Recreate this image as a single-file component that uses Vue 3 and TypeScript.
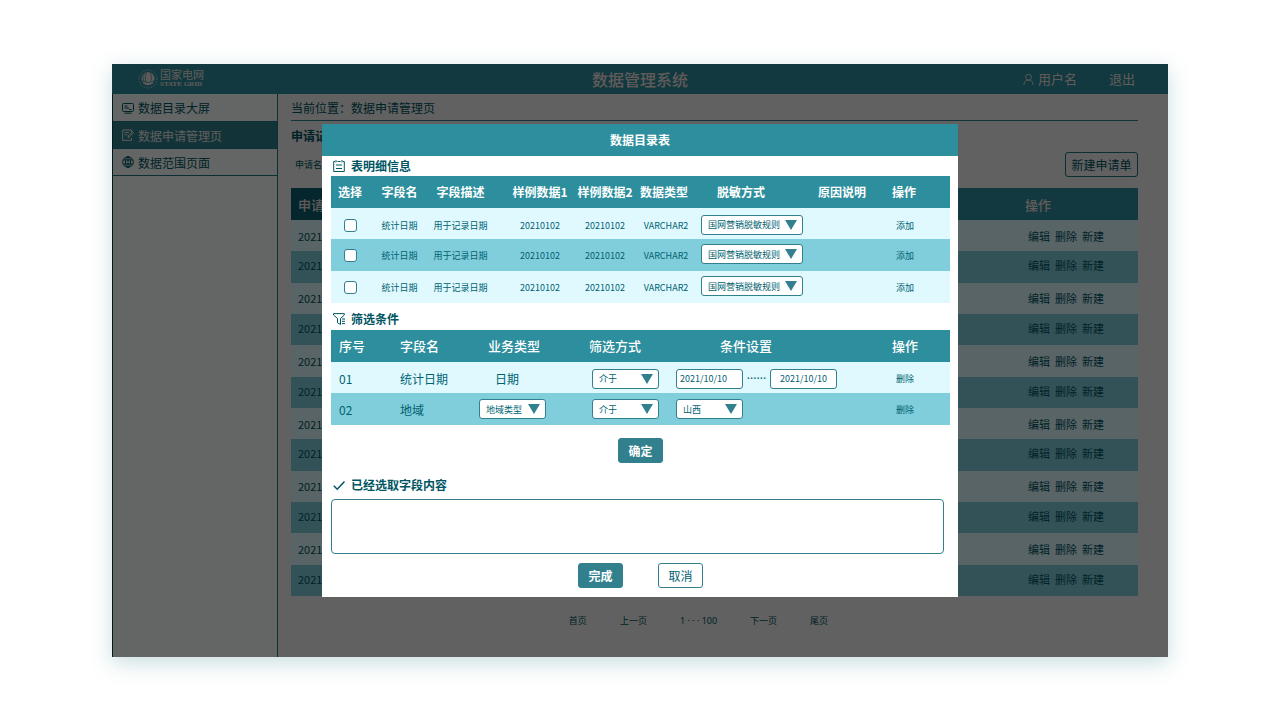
<script setup lang="ts">
import { ref } from 'vue'

interface Field {
  checked: boolean
  name: string
  desc: string
  sample1: string
  sample2: string
  type: string
  rule: string
}

const makeField = (): Field => ({
  checked: false,
  name: '统计日期',
  desc: '用于记录日期',
  sample1: '20210102',
  sample2: '20210102',
  type: 'VARCHAR2',
  rule: '国网营销脱敏规则',
})

const fields = ref<Field[]>([makeField(), makeField(), makeField()])
const records = Array.from({ length: 12 }, (_, i) => ({ id: i, code: '20210' }))
const pages = ['首页', '上一页', '1 · · · 100', '下一页', '尾页']
const startDate = ref('2021/10/10')
const endDate = ref('2021/10/10')
const selected = ref('')
</script>

<template>
  <div class="page">
    <div class="window">
      <header class="topbar">
        <div class="logo">
          <svg class="globe" viewBox="0 0 20 20" aria-hidden="true">
            <circle cx="10" cy="10" r="9" fill="none" stroke="#f0e4e0" stroke-width="1" stroke-dasharray="1 1.500" />
            <circle cx="10" cy="9.600" r="6.600" fill="#f0e4e0" stroke="none" />
            <path d="M9.500 2.500c-2.500 3-3 7-1 10.500M11 2.500c2.500 3 3 6.500 1.500 10M6.500 4.500c-2 3-2 5.500 0 8.500M3.500 11.500c4 2.500 9 2.500 13 0" fill="none" stroke="#2d8e9d" stroke-width="0.800" />
          </svg>
          <div class="logo-text">
            <span class="logo-cn">国家电网</span>
            <span class="logo-en">STATE GRID</span>
          </div>
        </div>
        <h1>数据管理系统</h1>
        <div class="account">
          <a href="#" class="user">
            <svg viewBox="0 0 12 13" aria-hidden="true">
              <circle cx="6" cy="4" r="3.200" />
              <path d="M1 12.500C1 9 3 7.200 6 7.200s5 1.800 5 5.300" />
            </svg>
            用户名
          </a>
          <a href="#">退出</a>
        </div>
      </header>

      <div class="main">
        <nav class="sidebar">
          <a href="#">
            <svg viewBox="0 0 12 12" aria-hidden="true">
              <rect x="0.500" y="1.500" width="11" height="8" rx="1" />
              <path d="M2.500 4h3M2.500 6h4.500M7 7.500h2.500M2.500 11.200h7" />
            </svg>
            数据目录大屏
          </a>
          <a href="#" class="active">
            <svg viewBox="0 0 12 12" aria-hidden="true">
              <path d="M9.500 3V1H.7v10.300h8.800V9M2.500 3.500h4.500M2.500 5.800h3M6 8.500l.4-1.800 4-4 1.100 1.100-4 4z" />
            </svg>
            数据申请管理页
          </a>
          <a href="#">
            <svg viewBox="0 0 12 12" aria-hidden="true">
              <circle cx="6" cy="6" r="5.300" />
              <ellipse cx="6" cy="6" rx="2.500" ry="5.300" />
              <path d="M6 .7v10.600M1.200 4h9.600M1.200 8h9.600" />
            </svg>
            数据范围页面
          </a>
        </nav>

        <section class="content">
          <p class="crumb">当前位置：数据申请管理页</p>
          <h2>申请记录</h2>
          <div class="filter">
            <span>申请名称</span>
            <button type="button">新建申请单</button>
          </div>
          <table class="records">
            <thead>
              <tr><th>申请号</th><th class="ops">操作</th></tr>
            </thead>
            <tbody>
              <tr v-for="r in records" :key="r.id">
                <td>{{ r.code }}</td>
                <td class="ops">
                  <div><a href="#">编辑</a><a href="#">删除</a><a href="#">新建</a></div>
                </td>
              </tr>
            </tbody>
          </table>
          <div class="pager">
            <a v-for="p in pages" :key="p" href="#">{{ p }}</a>
          </div>
        </section>
      </div>

      <div class="mask">
        <div class="dialog" role="dialog" aria-labelledby="dialog-title">
          <h2 id="dialog-title">数据目录表</h2>
          <div class="body">
            <h3>
              <svg viewBox="0 0 12 12" aria-hidden="true">
                <path d="M2 1.500H.7v10h10.600v-10H10M4.500 1.500h3M3 0v2.500M9 0v2.500M3 5h6M3 8.500h6" />
              </svg>
              表明细信息
            </h3>
            <table class="grid fields">
              <colgroup>
                <col class="w38" /><col class="w61" /><col class="w78" /><col class="w64" /><col class="w66" />
                <col class="w56" /><col class="w116" /><col /><col class="w76" />
              </colgroup>
              <thead>
                <tr>
                  <th>选择</th><th>字段名</th><th class="desc">字段描述</th><th>样例数据1</th><th>样例数据2</th>
                  <th class="type">数据类型</th><th class="rule">脱敏方式</th><th>原因说明</th><th class="act">操作</th>
                </tr>
              </thead>
              <tbody>
                <tr v-for="(f, i) in fields" :key="i">
                  <td><input v-model="f.checked" type="checkbox" :aria-label="f.name" /></td>
                  <td>{{ f.name }}</td>
                  <td class="desc">{{ f.desc }}</td>
                  <td>{{ f.sample1 }}</td>
                  <td>{{ f.sample2 }}</td>
                  <td>{{ f.type }}</td>
                  <td class="ctl">
                    <span class="select wide">
                      <select v-model="f.rule" aria-label="脱敏方式"><option>国网营销脱敏规则</option></select>
                      <svg viewBox="0 0 12 10" aria-hidden="true"><path d="M0 0h12L6 10z" /></svg>
                    </span>
                  </td>
                  <td></td>
                  <td class="act"><a href="#">添加</a></td>
                </tr>
              </tbody>
            </table>

            <h3 class="second">
              <svg viewBox="0 0 12 12" aria-hidden="true">
                <path d="M.5.600h10.800v1.400L7.500 5.500v6L4.500 9.800V5.500L.5 2zM9 6h3M9 8.300h3M9 10.600h3" />
              </svg>
              筛选条件
            </h3>
            <table class="grid conds">
              <colgroup>
                <col class="w61" /><col class="w80" /><col class="w112" /><col class="w84" /><col /><col class="w76" />
              </colgroup>
              <thead>
                <tr>
                  <th>序号</th><th>字段名</th><th class="biz">业务类型</th><th class="way">筛选方式</th>
                  <th class="setting">条件设置</th><th class="act">操作</th>
                </tr>
              </thead>
              <tbody>
                <tr>
                  <td>01</td>
                  <td>统计日期</td>
                  <td class="date">日期</td>
                  <td class="ctl">
                    <span class="select">
                      <select aria-label="筛选方式"><option>介于</option></select>
                      <svg viewBox="0 0 12 10" aria-hidden="true"><path d="M0 0h12L6 10z" /></svg>
                    </span>
                  </td>
                  <td class="ctl">
                    <div class="range">
                      <input v-model="startDate" type="text" aria-label="开始日期" />
                      <span>······</span>
                      <input v-model="endDate" type="text" class="end" aria-label="结束日期" />
                    </div>
                  </td>
                  <td class="act"><a href="#">删除</a></td>
                </tr>
                <tr>
                  <td>02</td>
                  <td>地域</td>
                  <td class="area">
                    <span class="select">
                      <select aria-label="业务类型"><option>地域类型</option></select>
                      <svg viewBox="0 0 12 10" aria-hidden="true"><path d="M0 0h12L6 10z" /></svg>
                    </span>
                  </td>
                  <td class="ctl">
                    <span class="select">
                      <select aria-label="筛选方式"><option>介于</option></select>
                      <svg viewBox="0 0 12 10" aria-hidden="true"><path d="M0 0h12L6 10z" /></svg>
                    </span>
                  </td>
                  <td class="ctl">
                    <span class="select">
                      <select aria-label="条件设置"><option>山西</option></select>
                      <svg viewBox="0 0 12 10" aria-hidden="true"><path d="M0 0h12L6 10z" /></svg>
                    </span>
                  </td>
                  <td class="act"><a href="#">删除</a></td>
                </tr>
              </tbody>
            </table>

            <div class="confirm"><button type="button" class="btn solid">确定</button></div>

            <h3>
              <svg viewBox="0 0 12 12" aria-hidden="true"><path class="tick" d="M.8 6.800l3.400 3.400L11.500 2.500" /></svg>
              <label for="selected">已经选取字段内容</label>
            </h3>
            <textarea id="selected" v-model="selected"></textarea>
            <div class="actions">
              <button type="button" class="btn solid">完成</button>
              <button type="button" class="btn">取消</button>
            </div>
          </div>
        </div>
      </div>
    </div>
  </div>
</template>

<style>
body {
  margin: 0;
  background: #fff;
}
</style>

<style scoped>
* {
  box-sizing: border-box;
}

.page {
  padding: 64px 112px 63px;
  font-family: 'Noto Sans CJK SC', sans-serif;
  font-size: 12px;
  color: #005563;
}

a {
  color: inherit;
  text-decoration: none;
}

h1, h2, h3, p {
  margin: 0;
}

button, input, select, textarea {
  font-family: inherit;
  color: inherit;
  margin: 0;
}

svg {
  fill: none;
  stroke: currentColor;
  stroke-width: 1;
  flex: none;
}

.window {
  position: relative;
  display: flex;
  flex-direction: column;
  background: #f0f2f0;
  box-shadow: 0 6px 20px rgba(40, 125, 135, 0.25);
}

.topbar {
  display: grid;
  grid-template-columns: 1fr auto 1fr;
  align-items: center;
  height: 30px;
  padding: 0 26px;
  background: #2d8e9d;
  color: #f0e4e0;
}

.topbar h1 {
  font-size: 16px;
  line-height: 30px;
  font-weight: 500;
}

.logo {
  display: flex;
  align-items: center;
  gap: 2px;
}

.globe {
  width: 20px;
  height: 20px;
}

.logo-text {
  display: flex;
  flex-direction: column;
  padding-bottom: 2px;
}

.logo-cn {
  font-size: 11px;
  line-height: 11px;
}

.logo-en {
  font: bold 7px/8px 'Liberation Serif', serif;
}

.account {
  display: flex;
  justify-content: flex-end;
  gap: 32px;
  padding-right: 7px;
  font-size: 13px;
  line-height: 30px;
}

.user {
  display: flex;
  align-items: center;
  gap: 4px;
}

.user svg {
  width: 11px;
  height: 13px;
}

.main {
  display: flex;
}

.sidebar {
  width: 166px;
  flex: none;
  background: #f8fffc;
  border-left: 1px solid #00444f;
  border-right: 1px solid #1c7583;
}

.sidebar a {
  display: flex;
  align-items: center;
  gap: 4px;
  height: 27px;
  padding-left: 9px;
  border-bottom: 1px solid #1c7583;
}

.sidebar a:first-child {
  height: 28px;
}

.sidebar svg {
  width: 12px;
  height: 12px;
}

.sidebar .active {
  background: #2d8290;
  color: #f0e8e4;
}

.content {
  flex: 1;
  padding: 0 30px 29px 13px;
}

.crumb {
  height: 27px;
  line-height: 28px;
  border-bottom: 1px solid #2d7f8c;
}

.content h2 {
  font-size: 12px;
  line-height: 18px;
  padding-top: 6px;
}

.filter {
  display: flex;
  align-items: center;
  justify-content: space-between;
  padding: 7px 0 11px 4px;
  font-size: 9px;
}

.filter button {
  width: 73px;
  height: 25px;
  padding: 0;
  font-size: 12px;
  background: none;
  border: 1px solid #1c7583;
  border-radius: 3px;
}

.records {
  width: 100%;
  height: 408px;
  border-collapse: collapse;
  table-layout: fixed;
  font-size: 11px;
}

.records th,
.records td {
  padding: 0 0 0 7px;
  text-align: left;
}

.records thead tr {
  background: linear-gradient(90deg, #0a5f6e 20%, #2d8e9d 60%);
}

.records th {
  height: 32px;
  font-size: 13px;
  font-weight: 500;
  color: #f0e4e0;
}

.records .ops {
  width: 120px;
}

.records td.ops {
  padding-left: 10px;
}

.records td.ops div {
  display: flex;
  gap: 5px;
}

.records tbody tr {
  height: 31px;
  background: #dff9ff;
}

.records tbody tr:nth-child(even) {
  background: #80cddb;
}

.records tbody tr:nth-child(even) td {
  padding-bottom: 3px;
}

.pager {
  display: flex;
  justify-content: center;
  gap: 33px;
  padding: 18px 32px 0 0;
  font-family: 'Noto Sans', 'Noto Sans CJK SC', sans-serif;
  font-size: 9px;
  line-height: 14px;
}

.mask {
  position: absolute;
  inset: 0;
  display: flex;
  justify-content: center;
  align-items: flex-start;
  padding: 60px 210px 0;
  background: rgba(0, 0, 0, 0.6);
}

.dialog {
  flex: 1;
  background: #fff;
  color: #006270;
}

.dialog h2 {
  font-size: 12px;
  line-height: 32px;
  font-weight: 700;
  text-align: center;
  color: #fff;
  background: #2d8e9d;
}

.body {
  padding: 0 8px 9px 9px;
}

.body h3 {
  display: flex;
  align-items: center;
  gap: 6px;
  height: 20px;
  padding-left: 2px;
  font-size: 12px;
  line-height: 20px;
  font-weight: 700;
  color: #005563;
}

.body h3 svg {
  width: 12px;
  height: 12px;
}

.body h3.second {
  height: 27px;
  padding-top: 4px;
}

.tick {
  stroke-width: 1.5;
}

.grid {
  width: 100%;
  border-collapse: collapse;
  table-layout: fixed;
}

.grid th,
.grid td {
  padding: 0;
  white-space: nowrap;
}

.grid th {
  height: 32px;
  padding-bottom: 1px;
  font-size: 12px;
  font-weight: 700;
  color: #fff;
  background: #2d8e9d;
}

.grid tbody tr {
  height: 32px;
  background: #dff9ff;
}

.grid tbody tr:first-child {
  height: 31px;
}

.grid tbody tr:nth-child(even) {
  background: #80cddb;
}

.fields td {
  font-size: 9px;
  text-align: center;
}

.fields tbody tr:first-child td {
  padding-top: 4px;
}

.fields .desc {
  padding-right: 17px;
}

.fields .type {
  padding-right: 4px;
}

.fields .rule {
  padding-right: 22px;
}

.fields tbody tr td.ctl {
  padding-bottom: 2px;
}

.fields input {
  display: block;
  width: 13px;
  height: 13px;
  margin: 0 auto;
  appearance: none;
  background: #fff;
  border: 1px solid #32808e;
  border-radius: 3px;
}

.fields input:checked {
  background: #32808e;
}

.grid .act {
  text-align: left;
  padding-left: 18px;
}

.grid td.act {
  padding-left: 22px;
  font-size: 9px;
}

.conds th,
.conds td {
  text-align: left;
  padding-left: 8px;
  font-size: 12px;
}

.conds th {
  padding-bottom: 2px;
  font-weight: 500;
  font-size: 13px;
}

.conds .biz {
  padding-left: 16px;
}

.conds .way {
  padding-left: 5px;
}

.conds .setting {
  padding-left: 52px;
}

.conds .date {
  padding-left: 23px;
}

.conds .area {
  padding-left: 7px;
}

.w38 { width: 38px; }
.w56 { width: 56px; }
.w61 { width: 61px; }
.w64 { width: 64px; }
.w66 { width: 66px; }
.w76 { width: 76px; }
.w78 { width: 78px; }
.w80 { width: 80px; }
.w84 { width: 84px; }
.w112 { width: 112px; }
.w116 { width: 116px; }

.select {
  display: grid;
  grid-template-columns: 1fr;
  align-items: center;
  width: 67px;
}

.select.wide {
  width: 102px;
  margin: 0 auto;
}

.select select,
.select svg {
  grid-area: 1 / 1;
}

.select select {
  width: 100%;
  height: 20px;
  padding: 0 0 0 6px;
  font-size: 9px;
  appearance: none;
  background: #fff;
  border: 1px solid #32808e;
  border-radius: 3px;
}

.select svg {
  width: 12px;
  height: 10px;
  margin-right: 6px;
  justify-self: end;
  fill: #32808e;
  stroke: none;
  pointer-events: none;
}

.range {
  display: flex;
  align-items: center;
}

.range input {
  width: 67px;
  height: 20px;
  padding: 0 3px;
  font-size: 9px;
  background: #fff;
  border: 1px solid #32808e;
  border-radius: 3px;
}

.range .end {
  text-align: center;
}

.range span {
  width: 27px;
  text-align: center;
  font-family: 'Noto Sans', sans-serif;
  font-size: 12px;
}

.conds tbody tr:first-child td {
  padding-top: 2px;
}

.btn {
  width: 45px;
  height: 25px;
  padding: 0;
  font-size: 12px;
  background: #fff;
  border: 1px solid #32808e;
  border-radius: 3px;
}

.btn.solid {
  font-weight: 700;
  color: #fff;
  background: #32808e;
}

.confirm {
  display: flex;
  justify-content: center;
  padding: 13px 0 12px;
}

textarea {
  display: block;
  width: calc(100% - 6px);
  height: 55px;
  margin-top: 4px;
  padding: 4px 8px;
  resize: none;
  font-size: 12px;
  border: 1px solid #32808e;
  border-radius: 4px;
}

.actions {
  display: flex;
  justify-content: center;
  gap: 35px;
  padding-top: 9px;
}
</style>
